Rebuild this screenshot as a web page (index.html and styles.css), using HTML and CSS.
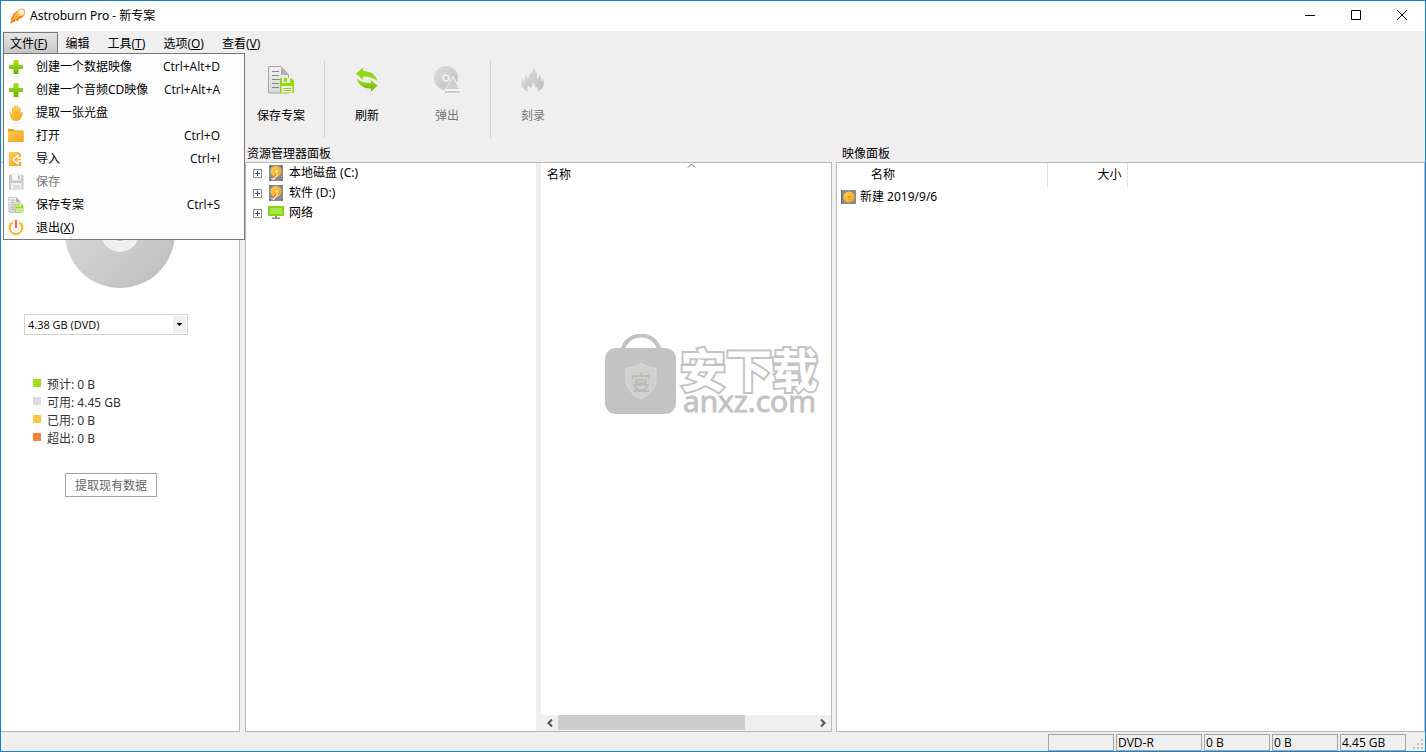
FILE: index.html
```html
<!DOCTYPE html>
<html lang="zh-CN">
<head>
<meta charset="utf-8">
<title>Astroburn Pro - 新专案</title>
<link rel="stylesheet" href="styles.css">
</head>
<body>
<svg class="defs" width="0" height="0" aria-hidden="true">
  <defs>
    <linearGradient id="green" x1="0" y1="0" x2="0" y2="1"><stop offset="0" stop-color="#a2e617"/><stop offset="1" stop-color="#6fae0c"/></linearGradient>
    <linearGradient id="gold" x1="0" y1="0" x2="1" y2="1"><stop offset="0" stop-color="#ffcf52"/><stop offset="1" stop-color="#f2a11c"/></linearGradient>
    <linearGradient id="silver" x1="0" y1="0" x2="1" y2="1"><stop offset="0" stop-color="#dedede"/><stop offset="1" stop-color="#bdbdbd"/></linearGradient>
    <linearGradient id="paper" x1="0" y1="0" x2="0" y2="1"><stop offset="0" stop-color="#f2f2f2"/><stop offset="1" stop-color="#d6d6d6"/></linearGradient>
    <symbol id="plus" viewBox="0 0 16 16"><path d="M6 1h4q.5 0 .5.500V6H14.500q.5 0 .5.500v3q0 .5-.5.500H10.500v4.500q0 .5-.5.500H6q-.5 0-.5-.5V10H1.500Q1 10 1 9.500v-3Q1 6 1.500 6H5.500V1.500Q5.500 1 6 1z" fill="url(#green)"/></symbol>
    <symbol id="drive" viewBox="0 0 16 16"><rect x="1" width="14" height="16" fill="#8b8b8b"/><circle cx="8" cy="6.500" r="5.500" fill="url(#gold)"/><circle cx="8.500" cy="6.500" r="1.200" fill="#fff0b0"/><path d="M3 14l5.500-6 1.500 1.500-4 5.500z" fill="#fff"/><path d="M4.500 13.500l4-4.500" stroke="#ef6b3a" stroke-width="1.500"/><path d="M2 1h1M13 1h1M2 15h1M13 15h1" stroke="#333"/></symbol>
    <symbol id="page-save" viewBox="0 0 28 28"><path d="M1.500.5H14l7.500 8V27H2.500q-1 0-1-1z" fill="url(#paper)" stroke="#a4a4a4"/><path d="M14 .5l8 8.500h-8z" fill="#b2b2b2"/><path d="M5 5.500h7M5 9.500h7M5 13.500h8M5 17.500h7M5 21.500h7" stroke="#8a8a8a"/><path d="M13 12h11l3 3v12H13z" fill="#8fdc0b"/><path d="M15 12h8v5h-8z" fill="#efefef"/><path d="M17 12h3v4h-3z" fill="#8fdc0b"/><path d="M14.500 20h11v6.500h-11z" fill="#efefef"/><path d="M16 22.500h8M16 24.500h8" stroke="#8fdc0b"/></symbol>
  </defs>
</svg>
<div class="window">
  <header class="titlebar">
    <svg class="app-icon" width="16" height="16" viewBox="0 0 16 16" aria-hidden="true"><path d="M1 15.500L2.500 12 1.500 11 4 8 3.500 6.500 8 3Q10 .5 13 .5q3 .5 3 4-.5 4-4 5.500L9.500 11.500 9 13l-2.500-.5L5 14z" fill="#f57a1c"/><path d="M3.500 12L9 5.500M6 11.500l5-4.500M5 8l4-4" stroke="#ffc23a" stroke-width="1.200"/><circle cx="12" cy="4.500" r="3.500" fill="#ffd58a"/><circle cx="12.500" cy="4" r="2.300" fill="#fff1d4"/></svg>
    <h1 class="title">Astroburn Pro - 新专案</h1>
    <div class="window-controls">
      <button class="control" aria-label="最小化"><svg width="12" height="12" viewBox="0 0 12 12"><path d="M1 5.500h10" stroke="#000"/></svg></button>
      <button class="control" aria-label="最大化"><svg width="12" height="12" viewBox="0 0 12 12"><path d="M1.500.5h9v9h-9z" fill="none" stroke="#000"/></svg></button>
      <button class="control" aria-label="关闭"><svg width="12" height="12" viewBox="0 0 12 12"><path d="M1 0l10 10M11 0L1 10" stroke="#000"/></svg></button>
    </div>
  </header>

  <nav class="menubar">
    <div class="menu-anchor">
      <button class="menu-button active" aria-expanded="true">文件(<u>F</u>)</button>
      <div class="dropdown" role="menu">
        <button class="item" role="menuitem"><svg class="item-icon"><use href="#plus"/></svg><span>创建一个数据映像</span><kbd>Ctrl+Alt+D</kbd></button>
        <button class="item" role="menuitem"><svg class="item-icon"><use href="#plus"/></svg><span>创建一个音频CD映像</span><kbd>Ctrl+Alt+A</kbd></button>
        <button class="item" role="menuitem"><svg class="item-icon" viewBox="0 0 16 16"><path d="M4 9V3q0-1 .9-1t.9 1v4L6 1.500Q6 .5 7 .5t1 1V7l.4-5.500q.1-1 1-1t.9 1V7l.6-4q.1-.8.900-.7t.8 1V9l.8-1.500q.6-.8 1.200-.3.600.4.300 1.300L13 13q-1.500 3-5 3-4.500 0-5.500-4L1.500 8Q1.300 7 2 6.800T3 7.500z" fill="url(#gold)"/></svg><span>提取一张光盘</span></button>
        <button class="item" role="menuitem"><svg class="item-icon" viewBox="0 0 16 16"><path d="M0 1h5.500L7 2.500h8.500V14H0z" fill="#e9a323"/><path d="M0 3.500h15.500v10H0z" fill="url(#gold)"/></svg><span>打开</span><kbd>Ctrl+O</kbd></button>
        <button class="item" role="menuitem"><svg class="item-icon" viewBox="0 0 16 16"><path d="M1 1h9l3 3v11H1z" fill="url(#gold)"/><path d="M10 1v3h3z" fill="#d98b10"/><path d="M10 4L5 8.500 10 13v-3h4V7h-4z" fill="#f8b936" stroke="#fff" stroke-width="1.300"/></svg><span>导入</span><kbd>Ctrl+I</kbd></button>
        <button class="item" role="menuitem" disabled><svg class="item-icon" viewBox="0 0 16 16"><path d="M1 .5h13l1.500 1.500v13.500H1z" fill="#c9c9c9"/><path d="M4 .5h9v6H4z" fill="#f6f6f6"/><path d="M10 1.500h2v4h-2z" fill="#c0c0c0"/><path d="M3 9h10.500v6H3z" fill="#f4f4f4"/><path d="M5 11h7v4H5z" fill="#ddd"/></svg><span>保存</span></button>
        <button class="item" role="menuitem"><svg class="item-icon"><use href="#page-save"/></svg><span>保存专案</span><kbd>Ctrl+S</kbd></button>
        <button class="item" role="menuitem"><svg class="item-icon" viewBox="0 0 16 16"><path d="M4.500 2.500a6.300 6.300 0 1 0 7 0" fill="none" stroke="#fbb92e" stroke-width="2.200"/><path d="M8 0v8" stroke="#ee6a3d" stroke-width="2.200"/></svg><span>退出(<u>X</u>)</span></button>
      </div>
    </div>
    <button class="menu-button">编辑</button>
    <button class="menu-button">工具(<u>T</u>)</button>
    <button class="menu-button">选项(<u>O</u>)</button>
    <button class="menu-button">查看(<u>V</u>)</button>
  </nav>

  <div class="toolbar">
    <button class="tool"><svg width="28" height="28" aria-hidden="true"><use href="#page-save"/></svg>保存专案</button>
    <span class="divider"></span>
    <button class="tool"><svg width="28" height="28" viewBox="0 0 28 28" aria-hidden="true"><path d="M3 7.500L10 1.500V5q11-.5 14.500 10Q18 10 10 10.500V14z" fill="#91d90f"/><path d="M24.500 19.500L18 25.500v-3Q7 23 3.500 12.500 10 17.500 18 17v-3z" fill="url(#green)"/></svg>刷新</button>
    <button class="tool" disabled><svg width="28" height="28" viewBox="0 0 28 28" aria-hidden="true"><circle cx="13" cy="12" r="12" fill="url(#silver)"/><circle cx="13" cy="12" r="3" fill="none" stroke="#f4f4f4" stroke-width="1.500"/><path d="M20 10.500l7 13H12.500z" fill="#cfcfcf" stroke="#f5f5f5"/><path d="M11.500 24.500h16v3h-16z" fill="#ccc" stroke="#f5f5f5"/></svg>弹出</button>
    <span class="divider"></span>
    <button class="tool" disabled><svg width="28" height="28" viewBox="0 0 28 28" aria-hidden="true"><path d="M14 2q5 3.500 4 11 2.500-1 2-5 3 3 2 7 1.500 0 2-2.500 2.500 6-1 10-2 2-4.500 3 1-3-1-5l-1 1.500q-.5-4-3-6 .5 4-2 6L9 19.500q-2 3.500 1 6-5-1-7-5-1.500-3 .5-8Q4 15 6 16 4.500 11 7.500 8q0 3.500 2 5Q9 9 13 6.500q2-2 1-4.500z" fill="url(#silver)"/></svg>刻录</button>
  </div>

  <main class="workspace">
    <section class="column">
      <h2 class="caption"></h2>
      <div class="pane summary">
        <svg class="disc" width="110" height="110" viewBox="0 0 110 110" aria-hidden="true"><circle cx="55" cy="55" r="55" fill="url(#silver)"/><circle cx="55" cy="55" r="19" fill="#efefef"/><circle cx="55" cy="55" r="7" fill="#fff" stroke="#b8b8b8" stroke-width="2"/></svg>
        <div class="select-box">
          <select aria-label="光盘容量"><option>4.38 GB (DVD)</option></select>
          <svg class="select-arrow" width="13" height="17" viewBox="0 0 13 17" aria-hidden="true"><path d="M3.500 7h6l-3 3z" fill="#000"/></svg>
        </div>
        <ul class="legend">
          <li><i class="swatch estimated"></i>预计: 0 B</li>
          <li><i class="swatch free"></i>可用: 4.45 GB</li>
          <li><i class="swatch used"></i>已用: 0 B</li>
          <li><i class="swatch over"></i>超出: 0 B</li>
        </ul>
        <button class="extract">提取现有数据</button>
      </div>
    </section>

    <section class="column browse">
      <h2 class="caption">资源管理器面板</h2>
      <div class="pane explorer">
        <ul class="tree">
          <li><button class="expand" aria-label="展开"></button><svg width="16" height="16" aria-hidden="true"><use href="#drive"/></svg>本地磁盘 (C:)</li>
          <li><button class="expand" aria-label="展开"></button><svg width="16" height="16" aria-hidden="true"><use href="#drive"/></svg>软件 (D:)</li>
          <li><button class="expand" aria-label="展开"></button><svg width="16" height="16" viewBox="0 0 16 16" aria-hidden="true"><rect y="1" width="16" height="10" rx="1" fill="#86d40c"/><rect x="2" y="3" width="12" height="6" fill="#a9e84a"/><path d="M7 11h2v1.500h3V14H4v-1.500h3z" fill="#8a8a8a"/></svg>网络</li>
        </ul>
        <div class="files">
          <div class="files-head">名称<svg class="sort" width="9" height="6" viewBox="0 0 9 6" aria-hidden="true"><path d="M1 4.500L4.500 1 8 4.500" fill="none" stroke="#666"/></svg></div>
          <div class="watermark">
            <svg width="71" height="80" viewBox="0 0 71 80" aria-hidden="true"><path d="M17 18C21-4 51-4 55 18" fill="none" stroke="#c3c3c3" stroke-width="4"/><rect y="14" width="71" height="66" rx="11" fill="#c3c3c3"/><path d="M36 29q7 5 15 5v14q-2 11-15 17Q23 59 21 48V34q8 0 15-5z" fill="#d0d0cd" stroke="#dadad7"/><path d="M36 39v3M28 45v-3h16v3M31 46h10v3H31zM28 51h16M30 51q0 5 6 5t6-5M28 57h16" fill="none" stroke="#bcbcbc" stroke-width="2"/></svg>
            <div class="watermark-text"><strong>安下载</strong><span>anxz.com</span></div>
          </div>
          <div class="scrollbar">
            <button aria-label="向左滚动"><svg width="8" height="8" viewBox="0 0 8 8"><path d="M6 .5L2.500 4 6 7.500" fill="none" stroke="#505050" stroke-width="2"/></svg></button>
            <div class="track"><div class="thumb"></div></div>
            <button aria-label="向右滚动"><svg width="8" height="8" viewBox="0 0 8 8"><path d="M2 .5L5.500 4 2 7.500" fill="none" stroke="#505050" stroke-width="2"/></svg></button>
          </div>
        </div>
      </div>
    </section>

    <section class="column">
      <h2 class="caption wide">映像面板</h2>
      <div class="pane">
        <table class="image-table">
          <thead><tr><th class="name">名称</th><th class="size">大小</th><th></th></tr></thead>
          <tbody><tr><td colspan="3"><div class="entry"><svg width="15" height="15" viewBox="0 0 15 15" aria-hidden="true"><rect width="15" height="14" fill="#8a8a8a"/><path d="M.5 0v14" stroke="#666"/><circle cx="8" cy="7" r="5.500" fill="url(#gold)"/><circle cx="8" cy="7" r="1" fill="#c98a14"/></svg>新建 2019/9/6</div></td></tr></tbody>
        </table>
      </div>
    </section>
  </main>

  <footer class="statusbar">
    <span class="cell"></span>
    <span class="cell media">DVD-R</span>
    <span class="cell">0 B</span>
    <span class="cell">0 B</span>
    <span class="cell">4.45 GB</span>
    <svg class="grip" width="12" height="12" viewBox="0 0 12 12" aria-hidden="true"><path d="M9 1h2v2H9zM5 5h2v2H5zM9 5h2v2H9zM1 9h2v2H1zM5 9h2v2H5zM9 9h2v2H9z" fill="#bfbfbf"/></svg>
  </footer>
</div>
</body>
</html>
```
FILE: styles.css
```css
* {
  box-sizing: border-box;
}

body {
  margin: 0;
  font: 12px/16px "Noto Sans", "Noto Sans CJK SC", sans-serif;
  color: #000;
}

button,
select {
  margin: 0;
  padding: 0;
  border: 0;
  background: none;
  font: inherit;
  color: inherit;
}

ul {
  margin: 0;
  padding: 0;
  list-style: none;
}

svg {
  flex: none;
}

.defs {
  position: absolute;
}

.window {
  display: flex;
  flex-direction: column;
  min-height: 100vh;
  border: 1px solid #1a7fd0;
  background: #efefef;
}

.titlebar {
  display: flex;
  align-items: center;
  height: 30px;
  padding-left: 8px;
  background: #fff;
}

.title {
  flex: 1;
  margin: 0 0 0 5px;
  font-size: 12px;
  font-weight: 400;
}

.window-controls {
  display: flex;
}

.control {
  display: flex;
  align-items: center;
  justify-content: center;
  width: 46px;
  height: 30px;
}

.menubar {
  display: flex;
  height: 23px;
  padding: 1px 2px 0;
}

.menu-anchor {
  position: relative;
}

.menu-button {
  display: block;
  height: 22px;
  padding: 2px 11px 0 7px;
}

.menu-button.active {
  padding: 1px 10px 0 6px;
  border: 1px solid #777;
  border-bottom: 0;
  background: linear-gradient(#e6e6e6, #c4c4c4);
}

.dropdown {
  position: absolute;
  top: 21px;
  left: 0;
  z-index: 2;
  width: 242px;
  padding-top: 1px;
  border: 1px solid #777;
  background: #fdfdfd;
}

.item {
  display: flex;
  align-items: center;
  width: 100%;
  height: 23px;
  padding: 0 24px 0 4px;
  text-align: left;
}

.item:disabled {
  color: #777;
}

.item-icon {
  width: 16px;
  height: 16px;
  margin-right: 12px;
}

.item kbd {
  margin-left: auto;
  font-family: "Open Sans", sans-serif;
  font-size: 12px;
}

.toolbar {
  display: flex;
  height: 92px;
  padding: 6px 0 8px 240px;
}

.tool {
  display: flex;
  flex-direction: column;
  align-items: center;
  gap: 14px;
  width: 80px;
  padding-top: 6px;
}

.tool:disabled {
  color: #777;
}

.divider {
  width: 1px;
  margin: 0 2px 0 3px;
  background: #d2d2d2;
}

.workspace {
  flex: 1;
  display: grid;
  grid-template-columns: 239px minmax(0, 588fr) minmax(0, 589fr);
  column-gap: 4px;
}

.column {
  display: flex;
  flex-direction: column;
}

.browse {
  padding-left: 1px;
}

.caption {
  height: 16px;
  margin: 0;
  padding-left: 2px;
  font-size: 12px;
  font-weight: 400;
}

.caption.wide {
  padding-left: 6px;
}

.pane {
  flex: 1;
  border: 1px solid #b9b9b9;
  background: #fff;
}

.summary {
  border-left: 0;
  padding-top: 15px;
  color: #333;
}

.disc {
  display: block;
  margin: 0 auto;
}

.select-box {
  position: relative;
  width: 164px;
  margin: 26px 0 0 23px;
}

.select-box select {
  display: block;
  width: 100%;
  height: 21px;
  padding-left: 3px;
  border: 1px solid #d3d3d3;
  background: #fff;
  font-family: "Open Sans", sans-serif;
  font-size: 11px;
  color: #000;
  appearance: none;
}

.select-arrow {
  position: absolute;
  top: 2px;
  right: 2px;
  background: #efefef;
  pointer-events: none;
}

.legend {
  margin: 41px 0 25px 32px;
  line-height: 18px;
}

.legend li {
  display: flex;
  gap: 6px;
}

.swatch {
  width: 8px;
  height: 8px;
  margin-top: 3px;
}

.estimated {
  background: #9fe01b;
}

.free {
  background: #dcdcdc;
}

.used {
  background: #fbc743;
}

.over {
  background: #f98237;
}

.extract {
  display: block;
  width: 92px;
  height: 24px;
  margin-left: 64px;
  padding-top: 1px;
  border: 1px solid #a3a3a3;
  color: #666;
}

.explorer {
  display: grid;
  grid-template-columns: minmax(0, 1fr) minmax(0, 1fr);
  column-gap: 5px;
  background: linear-gradient(#efefef, #efefef) 50% 0 / 5px 100% no-repeat #fff;
}

.tree li {
  display: flex;
  align-items: center;
  height: 20px;
  padding-left: 7px;
}

.tree svg {
  margin: 0 5px 0 6px;
}

.expand {
  width: 9px;
  height: 9px;
  border: 1px solid #919191;
  background:
    linear-gradient(#3a4a7a, #3a4a7a) center / 5px 1px no-repeat,
    linear-gradient(#3a4a7a, #3a4a7a) center / 1px 5px no-repeat,
    #fff;
}

.files {
  position: relative;
  display: flex;
  flex-direction: column;
}

.files-head {
  position: relative;
  height: 24px;
  padding: 4px 6px;
}

.sort {
  position: absolute;
  top: 0;
  left: calc(50% + 1px);
}

.watermark {
  position: absolute;
  top: 171px;
  left: 64px;
  display: flex;
  gap: 4px;
  color: #c3c3c3;
}

.watermark-text {
  display: flex;
  flex-direction: column;
  padding-top: 13px;
  white-space: nowrap;
}

.watermark-text strong {
  font-size: 46px;
  line-height: 44px;
  font-weight: 700;
  color: #fff;
  -webkit-text-stroke: 4px #c3c3c3;
  paint-order: stroke fill;
}

.watermark-text span {
  padding-left: 3px;
  font-family: "Open Sans", sans-serif;
  font-size: 30px;
  line-height: 20px;
  -webkit-text-stroke: 1px #c3c3c3;
}

.scrollbar {
  display: flex;
  height: 16px;
  margin-top: auto;
  background: #efefef;
}

.scrollbar button {
  width: 17px;
}

.track {
  flex: 1;
}

.thumb {
  width: 73%;
  height: 15px;
  background: #cdcdcd;
}

.image-table {
  width: 100%;
  border-collapse: collapse;
  table-layout: fixed;
}

.image-table th {
  height: 24px;
  padding: 0;
  font-weight: 400;
}

.image-table .name {
  width: 210px;
  padding-left: 34px;
  border-right: 1px solid #e2e2e2;
  text-align: left;
}

.image-table .size {
  width: 80px;
  padding-right: 5px;
  border-right: 1px solid #e2e2e2;
  text-align: right;
}

.image-table td {
  padding: 0;
}

.entry {
  display: flex;
  align-items: center;
  gap: 4px;
  height: 20px;
  padding-left: 4px;
}

.statusbar {
  display: flex;
  justify-content: flex-end;
  gap: 2px;
  height: 19px;
  padding: 2px 1px 0 0;
  font-family: "Open Sans", sans-serif;
}

.cell {
  width: 66px;
  height: 17px;
  padding-left: 1px;
  border: 1px solid #a5a5a5;
  line-height: 16px;
}

.media {
  width: 86px;
}

.grip {
  margin: 4px 0 0 4px;
}
```
